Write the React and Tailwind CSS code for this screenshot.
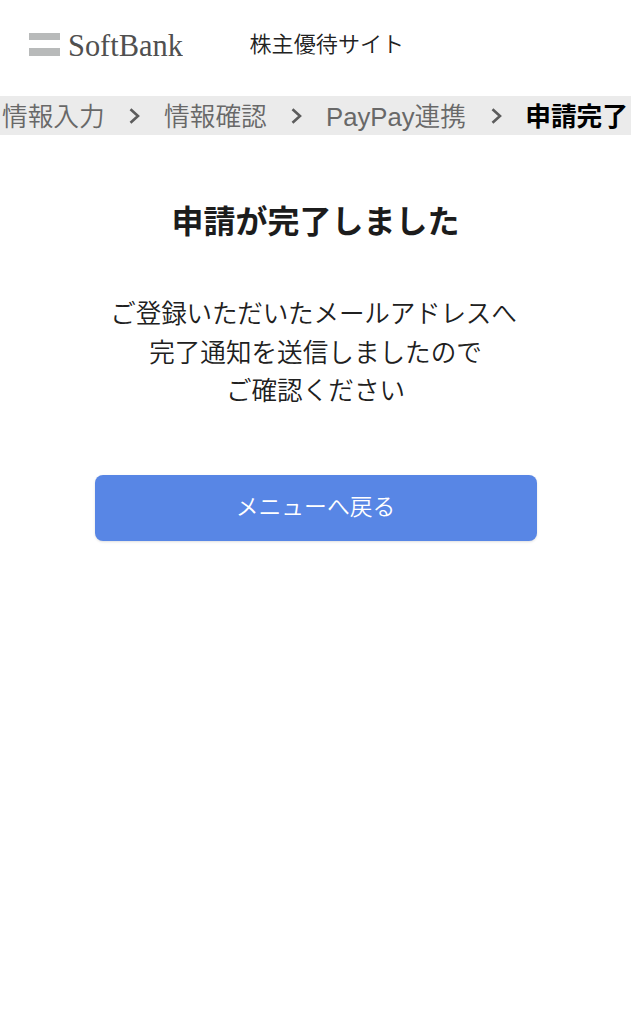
const steps = ['情報入力', '情報確認', 'PayPay連携'];

function Chevron() {
  return (
    <svg className="h-4 w-3 shrink-0" viewBox="0 0 12 16" fill="none" stroke="#5c5c5c" strokeWidth="2.6">
      <path d="M2.5 1.2 10 8 2.5 14.8" />
    </svg>
  );
}

function Header() {
  return (
    <header className="flex h-24 items-start pl-[29px] pt-[26px]">
      <div className="flex h-9 w-[220.5px] items-center">
        <div className="mr-2 flex w-[31px] flex-col gap-2">
          <span className="h-[7.5px] bg-[#b8baba]" />
          <span className="h-[7.5px] bg-[#b8baba]" />
        </div>
        <span className="origin-left scale-x-[0.95] pt-px font-['Liberation_Serif',serif] text-[32px] leading-9 text-[#505050]">
          SoftBank
        </span>
      </div>
      <span className="pt-px text-[22.1px] leading-9 text-[#222222]">株主優待サイト</span>
    </header>
  );
}

function Steps() {
  return (
    <nav className="flex h-[39px] items-center justify-between overflow-hidden whitespace-nowrap bg-[#ebebeb] pl-[2px] pr-[3px] text-[25.7px] leading-[39px] text-[#686868]">
      {steps.map((step) => (
        <div key={step} className="contents">
          <span className="pt-[3px]">{step}</span>
          <Chevron />
        </div>
      ))}
      <span className="pt-[3px] font-['Liberation_Sans','Noto_Sans_CJK_JP',sans-serif] font-bold text-black">申請完了</span>
    </nav>
  );
}

export default function App() {
  return (
    <div className="min-h-screen bg-white font-['Liberation_Sans','Noto_Sans_CJK_JP_DemiLight','Noto_Sans_CJK_JP',sans-serif]">
      <Header />
      <Steps />
      <main className="flex flex-col items-center pt-[63px]">
        <h1 className="font-['Liberation_Sans','Noto_Sans_CJK_JP',sans-serif] text-[32px] font-bold leading-12 text-[#1c1c1c]">
          申請が完了しました
        </h1>
        <p className="mt-[47px] whitespace-nowrap text-center font-['Noto_Sans_CJK_JP_DemiLight','Noto_Sans_CJK_JP',sans-serif] text-[25.6px] leading-[38.6px] text-[#202020]">
          <span className="-ml-1 tracking-[-0.2px]">ご登録いただいたメールアドレスへ</span>
          <br />
          完了通知を送信しましたので
          <br />
          ご確認ください
        </p>
        <button className="mt-[66px] h-[66px] w-[442px] rounded-lg bg-[#5886e5] pb-[2px] text-[22.8px] text-white shadow-sm">
          メニューへ戻る
        </button>
      </main>
    </div>
  );
}
